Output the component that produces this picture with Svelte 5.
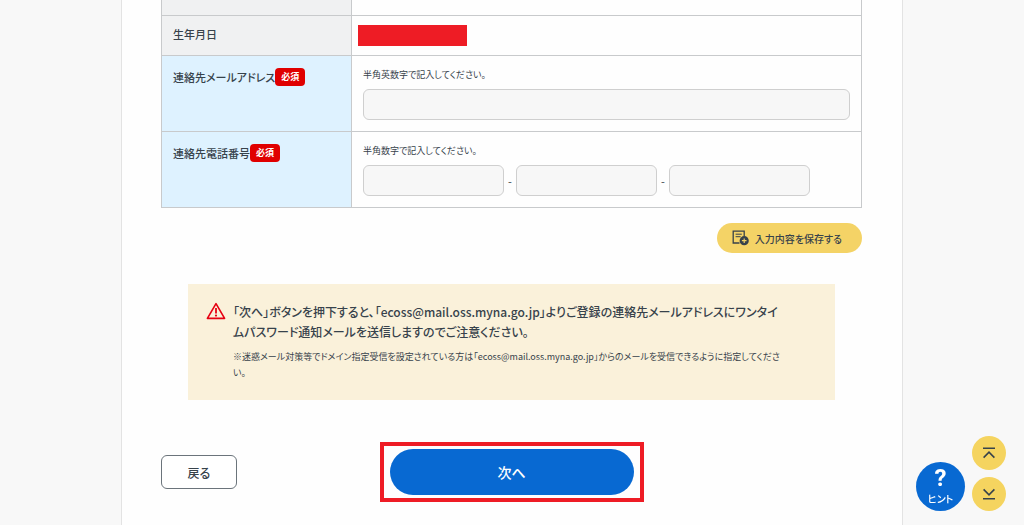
<script>
	let email = $state('');
	let phone = $state(['', '', '']);

	const phoneLabels = ['市外局番', '市内局番', '加入者番号'];

	function scrollToTop() {
		window.scrollTo({ top: 0, behavior: 'smooth' });
	}

	function scrollToBottom() {
		window.scrollTo({ top: document.body.scrollHeight, behavior: 'smooth' });
	}
</script>

<main class="page" lang="ja">
	<table class="form-table">
		<tbody>
			<tr class="form-table__row--spacer">
				<th></th>
				<td></td>
			</tr>
			<tr class="form-table__row--birth">
				<th scope="row">生年月日</th>
				<td class="form-table__masked"><div class="mask"></div></td>
			</tr>
			<tr class="form-table__row--required">
				<th scope="row">
					<div class="label">
						<label for="email">連絡先メールアドレス</label><span class="badge">必須</span>
					</div>
				</th>
				<td>
					<p class="help" id="email-help">半角英数字で記入してください。</p>
					<input
						class="field"
						id="email"
						type="email"
						aria-describedby="email-help"
						bind:value={email}
					/>
				</td>
			</tr>
			<tr class="form-table__row--required">
				<th scope="row">
					<div class="label">
						<label for="phone-0">連絡先電話番号</label><span class="badge">必須</span>
					</div>
				</th>
				<td>
					<p class="help" id="phone-help">半角数字で記入してください。</p>
					<div class="phone">
						{#each phone as _, i}
							{#if i > 0}
								<span class="phone__dash">-</span>
							{/if}
							<input
								class="field field--phone"
								id="phone-{i}"
								type="tel"
								aria-label={phoneLabels[i]}
								aria-describedby="phone-help"
								bind:value={phone[i]}
							/>
						{/each}
					</div>
				</td>
			</tr>
		</tbody>
	</table>

	<div class="save-row">
		<button class="save" type="button">
			<svg class="save__icon" viewBox="0 0 17 16" aria-hidden="true">
				<path
					d="M12.2 6V1.2H1.2V13H7.5"
					fill="none"
					stroke="currentColor"
					stroke-width="1.3"
				/>
				<path d="M3.6 4.2H9.8M3.6 6.7H8.6" stroke="currentColor" stroke-width="1" />
				<circle cx="12.2" cy="10.7" r="4.6" fill="currentColor" />
				<path d="M12.2 8.4V13M9.9 10.7H14.5" stroke="#f4d366" stroke-width="1.2" />
			</svg>
			入力内容を保存する
		</button>
	</div>

	<section class="notice">
		<svg class="notice__icon" viewBox="0 0 20 18" aria-hidden="true">
			<path
				d="M10 1.6L18.6 16.4H1.4Z"
				fill="none"
				stroke="#e60012"
				stroke-width="1.6"
				stroke-linejoin="round"
			/>
			<path d="M10 6V11.6" stroke="#e60012" stroke-width="1.8" />
			<circle cx="10" cy="13.6" r="1.1" fill="#e60012" />
		</svg>
		<div>
			<p class="notice__main">
				「次へ」ボタンを押下すると、「ecoss@mail.oss.myna.go.jp」よりご登録の連絡先メールアドレスにワンタイムパスワード通知メールを送信しますのでご注意ください。
			</p>
			<p class="notice__sub">
				※迷惑メール対策等でドメイン指定受信を設定されている方は「ecoss@mail.oss.myna.go.jp」からのメールを受信できるように指定してください。
			</p>
		</div>
	</section>

	<div class="actions">
		<button class="back" type="button">戻る</button>
		<div class="highlight">
			<button class="next" type="button">次へ</button>
		</div>
	</div>
</main>

<aside class="float" lang="ja">
	<button class="hint" type="button">
		<span class="hint__mark">?</span>
		<span class="hint__text">ヒント</span>
	</button>
	<div class="float__scroll">
		<button class="round" type="button" aria-label="ページの先頭へ" onclick={scrollToTop}>
			<svg viewBox="0 0 14 12" aria-hidden="true">
				<path d="M1 1.2H13M1.6 10.6L7 5.2L12.4 10.6" />
			</svg>
		</button>
		<button class="round" type="button" aria-label="ページの末尾へ" onclick={scrollToBottom}>
			<svg viewBox="0 0 14 12" aria-hidden="true">
				<path d="M1 10.8H13M1.6 1.4L7 6.8L12.4 1.4" />
			</svg>
		</button>
	</div>
</aside>

<style>
	:global(body) {
		background: #f8f8f8;
		color: #37424b;
		font-family: 'Noto Sans CJK JP', sans-serif;
		font-feature-settings: 'palt';
	}

	.page {
		box-sizing: border-box;
		max-width: 782px;
		min-height: 100vh;
		margin: 0 auto;
		padding: 0 40px 23px 39px;
		border: solid #e3e3e3;
		border-width: 0 1px;
		background: #fefefe;
	}

	button {
		padding: 0;
		border: none;
		color: inherit;
		font: inherit;
		font-feature-settings: inherit;
		cursor: pointer;
	}

	p {
		margin: 0;
	}

	.form-table {
		width: 100%;
		border-spacing: 0;
		border: solid #c8cacc;
		border-width: 0 1px 0 1px;
		table-layout: fixed;
	}

	.form-table th,
	.form-table td {
		box-sizing: border-box;
		padding: 11px;
		border-bottom: 1px solid #c8cacc;
		vertical-align: top;
		text-align: left;
	}

	.form-table th {
		width: 190px;
		border-right: 1px solid #c8cacc;
		background: #f0f1f2;
		font-size: 11px;
		font-weight: 500;
		line-height: 16px;
	}

	.form-table .form-table__row--spacer > * {
		height: 16px;
		padding: 0;
	}

	.form-table .form-table__row--birth > * {
		height: 40px;
		padding-top: 10px;
	}

	.form-table .form-table__row--required > * {
		height: 76px;
	}

	.form-table .form-table__row--required > th {
		background: #def2ff;
	}

	.form-table .form-table__masked {
		padding: 9px 6px;
	}

	.mask {
		width: 109px;
		height: 21px;
		background: #ee1c25;
	}

	.label {
		display: flex;
		align-items: center;
		height: 20px;
	}

	.badge {
		padding: 0 6px;
		border-radius: 4px;
		background: #e00000;
		color: #fff;
		font-size: 9px;
		font-weight: 700;
		line-height: 18px;
	}

	.help {
		margin-bottom: 6px;
		font-size: 9px;
		line-height: 16px;
	}

	.field {
		display: block;
		box-sizing: border-box;
		width: 100%;
		height: 31px;
		padding: 0 8px;
		border: 1px solid #cfcfcf;
		border-radius: 6px;
		background: #f7f7f7;
		color: inherit;
		font: inherit;
		font-size: 12px;
	}

	.field--phone {
		width: 141px;
	}

	.phone {
		display: flex;
		align-items: center;
	}

	.phone__dash {
		width: 12px;
		font-size: 11px;
		line-height: 16px;
		text-align: center;
	}

	.save-row {
		display: flex;
		justify-content: flex-end;
		margin-top: 15px;
	}

	.save {
		display: flex;
		align-items: center;
		gap: 6px;
		height: 30px;
		padding: 0 20px 0 15px;
		border-radius: 15px;
		background: #f4d366;
		font-size: 10px;
		font-weight: 500;
	}

	.save__icon {
		width: 17px;
		height: 16px;
	}

	.notice {
		display: flex;
		gap: 7px;
		margin: 31px 27px 0;
		padding: 18px 48px 19px 18px;
		background: #faf1da;
	}

	.notice__icon {
		flex-shrink: 0;
		width: 20px;
		height: 18px;
	}

	.notice__main {
		font-size: 12px;
		font-weight: 500;
		line-height: 20px;
	}

	.notice__sub {
		margin-top: 7px;
		font-size: 9px;
		line-height: 16px;
	}

	.actions {
		display: grid;
		grid-template-columns: 1fr auto 1fr;
		align-items: center;
		margin-top: 42px;
	}

	.back {
		width: 76px;
		height: 34px;
		border: 1px solid #6b747b;
		border-radius: 6px;
		background: #fff;
		font-size: 12px;
		font-weight: 500;
	}

	.highlight {
		padding: 3px 6px;
		border: 4px solid #ee1c25;
	}

	.next {
		display: block;
		width: 244px;
		height: 46px;
		border-radius: 23px;
		background: #0869d2;
		color: #fff;
		font-size: 14px;
		font-weight: 500;
	}

	.float {
		position: fixed;
		right: 18px;
		bottom: 14px;
		display: flex;
		align-items: flex-end;
		gap: 7px;
	}

	.hint {
		display: flex;
		flex-direction: column;
		align-items: center;
		justify-content: center;
		box-sizing: border-box;
		width: 49px;
		height: 49px;
		padding-bottom: 4px;
		border-radius: 50%;
		background: #0869d2;
		color: #fff;
	}

	.hint__mark {
		font-family: Roboto, sans-serif;
		font-size: 24px;
		font-weight: 700;
		line-height: 28px;
	}

	.hint__text {
		font-size: 10px;
		font-weight: 500;
		line-height: 14px;
	}

	.float__scroll {
		display: flex;
		flex-direction: column;
		gap: 7px;
	}

	.round {
		display: flex;
		align-items: center;
		justify-content: center;
		width: 34px;
		height: 34px;
		border-radius: 50%;
		background: #f5d45f;
	}

	.round svg {
		width: 14px;
		height: 12px;
		fill: none;
		stroke: currentColor;
		stroke-width: 1.6;
	}
</style>
